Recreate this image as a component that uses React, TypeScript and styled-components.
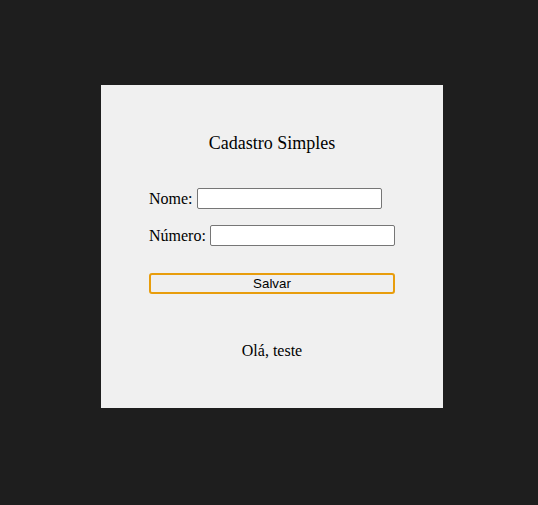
import React from "react";
import styled, { createGlobalStyle } from "styled-components";

const GlobalStyle = createGlobalStyle`
  html, body {
    margin: 0;
    padding: 0;
    background: #1e1e1e;
    font-family: "Liberation Serif", "Times New Roman", serif;
  }
`;

export default function App() {
  return (
    <>
      <GlobalStyle />
      <Page>
        <Card>
          <Title>Cadastro Simples</Title>
          <Form onSubmit={(e) => e.preventDefault()}>
            <Row>
              <Label htmlFor="nome">Nome:</Label>
              <Input id="nome" type="text" />
            </Row>
            <Row>
              <Label htmlFor="numero">Número:</Label>
              <Input id="numero" type="text" />
            </Row>
            <SaveButton type="submit">Salvar</SaveButton>
          </Form>
          <Greeting>Olá, teste</Greeting>
        </Card>
      </Page>
    </>
  );
}

const Page = styled.div`
  padding: 85px 0 0 101px;
  min-height: 505px;
  box-sizing: border-box;
`;

const Card = styled.div`
  width: 342px;
  box-sizing: border-box;
  padding: 47px 48px 48px;
  background: #f0f0f0;
  color: #000;
`;

const Title = styled.h2`
  margin: 0 0 34px;
  font-size: 18px;
  line-height: 22px;
  font-weight: normal;
  text-align: center;
`;

const Form = styled.form`
  display: flex;
  flex-direction: column;
  gap: 16px;
`;

const Row = styled.div`
  display: flex;
  align-items: center;
  gap: 4px;
  height: 21px;
`;

const Label = styled.label`
  font-size: 16px;
  line-height: 18px;
`;

const Input = styled.input`
  width: 185px;
  height: 21px;
  box-sizing: border-box;
  margin: 0;
  padding: 1px 2px;
  border: 1px solid #767676;
  border-radius: 2px;
  background: #fff;
  font: 13.33px "Liberation Sans", Arial, sans-serif;
`;

const SaveButton = styled.button`
  margin-top: 11px;
  width: 100%;
  height: 21px;
  box-sizing: border-box;
  padding: 0;
  border: 2px solid #e89d0c;
  border-radius: 3px;
  background: #efefef;
  color: #000;
  font: 13.33px "Liberation Sans", Arial, sans-serif;
  cursor: pointer;
`;

const Greeting = styled.p`
  margin: 48px 0 0;
  font-size: 16px;
  line-height: 18px;
  text-align: center;
`;
